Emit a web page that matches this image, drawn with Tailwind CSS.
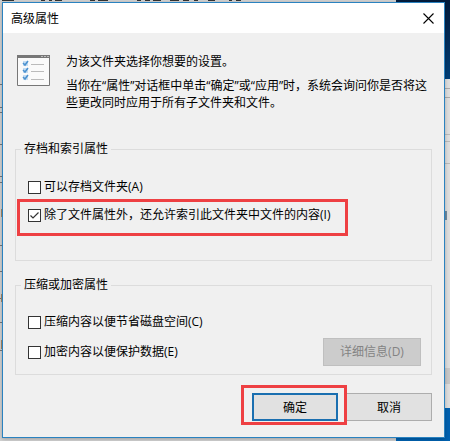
<!DOCTYPE html>
<html lang="zh-CN">
<head>
  <meta charset="UTF-8" />
  <meta name="viewport" content="width=device-width, initial-scale=1.0" />
  <title>高级属性</title>
  <script src="https://cdn.jsdelivr.net/npm/@tailwindcss/browser@4"></script>
</head>
<body class="relative min-h-screen overflow-hidden bg-[#d2d2d2] pt-[2px] pr-[5px] pb-[3px] pl-[2px] font-['Open_Sans','Noto_Sans_CJK_SC',sans-serif] text-xs leading-[17px] text-black">
  <!-- desktop and windows behind the dialog -->
  <div class="absolute inset-y-0 right-0 flex w-[54px] flex-col" aria-hidden="true">
    <div class="h-[79px] bg-linear-to-b from-[#031b3c] to-[#003f78]"></div>
    <div class="flex grow flex-col items-end bg-[#dedede]">
      <div class="mt-[9px] h-[10px] w-[5px] border-y border-[#aaa]"></div>
      <div class="mt-[36px] h-[8px] w-[5px] border-y border-[#bbb]"></div>
      <div class="mt-[21px] h-px w-[5px] bg-[#bbb]"></div>
      <div class="mt-[47px] flex h-[9px] w-[5px]"><div class="w-[2px] bg-[#6f8ba0]"></div></div>
      <div class="mt-[148px] h-[16px] w-[5px] bg-[#c8c8c8]"></div>
    </div>
    <div class="h-[33px] bg-[#0061b0]"></div>
  </div>
  <svg class="absolute top-0 left-0" width="260" height="441" viewBox="0 0 260 441" fill="none" aria-hidden="true">
    <path stroke="#333" d="M2 .5h12M41 .5h4M49 .5h3M55 .5h7M90 .5h5M98 .5h10M137 .5h4M145 .5h5M153 .5h8M170 .5h9M183 .5h6M194 .5h4M208 .5h7M229 .5h3M236 .5h5" />
    <path stroke="#777" d="M0 84.5h2M0 107.5h2M0 112.5h2M0 144.5h2M0 176.5h2M0 182.5h2M0 245.5h2M0 271.5h2M0 298.5h2M0 322.5h2M0 350.5h2" />
    <path stroke="#a98a66" d="M1.500 209v8M1.500 294v8M1.500 340v9" />
  </svg>

  <main class="relative border border-[#2a82c0] bg-[#f0f0f0] shadow-[0_1px_4px_rgba(0,0,0,0.25)]">
    <header class="flex h-[30px] items-center justify-between bg-white pr-2 pl-2">
      <h1>高级属性</h1>
      <button type="button" aria-label="关闭" class="p-[2px]">
        <svg width="11" height="11" viewBox="0 0 11 11" fill="none" stroke="#000" stroke-width="1.1">
          <path d="M.5.5l10 10M10.500.5l-10 10" />
        </svg>
      </button>
    </header>

    <form class="px-3 pt-5 pb-4">
      <section class="flex gap-4 pl-[2px]">
        <svg class="mt-[2px] shrink-0" width="33" height="31" viewBox="0 0 33 31" fill="none" aria-hidden="true">
          <path fill="#fafafa" stroke="#777" d="M.5.5h32v30H.5z" />
          <path fill="#777" d="M0 0h33v3H0z" />
          <path stroke="#bbb" d="M24 1.500h2M27 1.500h2M30 1.500h2" />
          <path fill="#c5ddf3" d="M6 6h5v5H6zM6 13h5v5H6zM6 20h5v5H6z" />
          <path stroke="#4b91cf" stroke-width="1.500" d="M6 8l2 2 3-4M6 15l2 2 3-4M6 22l2 2 3-4" />
          <path stroke="#bbb" d="M14 9.500h13M14 16.500h13M14 24.500h13" />
        </svg>
        <div class="space-y-[7px]">
          <p>为该文件夹选择你想要的设置。</p>
          <p class="whitespace-nowrap">当你在“属性”对话框中单击“确定”或“应用”时，系统会询问你是否将这<br />些更改同时应用于所有子文件夹和文件。</p>
        </div>
      </section>

      <fieldset class="mt-[30px] border border-[#dcdcdc] pr-[10px] pb-[37px] pl-3">
        <legend class="-ml-[7px] px-[3px] leading-4">存档和索引属性</legend>
        <div class="flex flex-col items-start gap-3 pt-[22px] leading-4">
          <label class="flex items-center gap-[3px]">
            <input type="checkbox" class="size-[13px] appearance-none border border-[#333] bg-white checked:bg-[#333]" />
            可以存档文件夹(A)
          </label>
          <label class="relative flex items-center gap-[3px]">
            <span class="grid">
              <input type="checkbox" checked class="col-start-1 row-start-1 size-[13px] appearance-none border border-[#333] bg-white" />
              <svg class="col-start-1 row-start-1" width="13" height="13" viewBox="0 0 13 13" fill="none" stroke="#333" stroke-width="1.200" aria-hidden="true">
                <path d="M2.500 6.500L5 9l5.500-5.500" />
              </svg>
            </span>
            除了文件属性外，还允许索引此文件夹中文件的内容(I)
            <span class="pointer-events-none absolute -top-2 -right-[18px] -bottom-[13px] -left-[11px] border-3 border-[#ee4043]"></span>
          </label>
        </div>
      </fieldset>

      <fieldset class="mt-4 border border-[#dcdcdc] pr-[10px] pb-2 pl-3">
        <legend class="-ml-[7px] px-[3px] leading-4">压缩或加密属性</legend>
        <div class="flex justify-between pt-[21px] leading-4">
          <div class="flex flex-col items-start gap-[14px] pb-[6px]">
            <label class="flex items-center gap-[3px]">
              <input type="checkbox" class="size-[13px] appearance-none border border-[#333] bg-white checked:bg-[#333]" />
              压缩内容以便节省磁盘空间(C)
            </label>
            <label class="flex items-center gap-[3px]">
              <input type="checkbox" class="size-[13px] appearance-none border border-[#333] bg-white checked:bg-[#333]" />
              加密内容以便保护数据(E)
            </label>
          </div>
          <button type="button" disabled class="h-7 w-[98px] self-end border border-[#bfbfbf] bg-[#cccccc] text-[#838383]">详细信息(D)</button>
        </div>
      </fieldset>

      <div class="mt-[18px] flex justify-end gap-2">
        <button type="submit" class="relative h-7 w-[86px] border-2 border-[#1a6fb0] bg-[#e1e1e1]">
          确定
          <span class="pointer-events-none absolute -top-[10px] -right-[11px] -bottom-[6px] -left-[13px] border-3 border-[#ee4043]"></span>
        </button>
        <button type="button" class="h-7 w-[86px] border border-[#adadad] bg-[#e1e1e1]">取消</button>
      </div>
    </form>
  </main>
</body>
</html>
